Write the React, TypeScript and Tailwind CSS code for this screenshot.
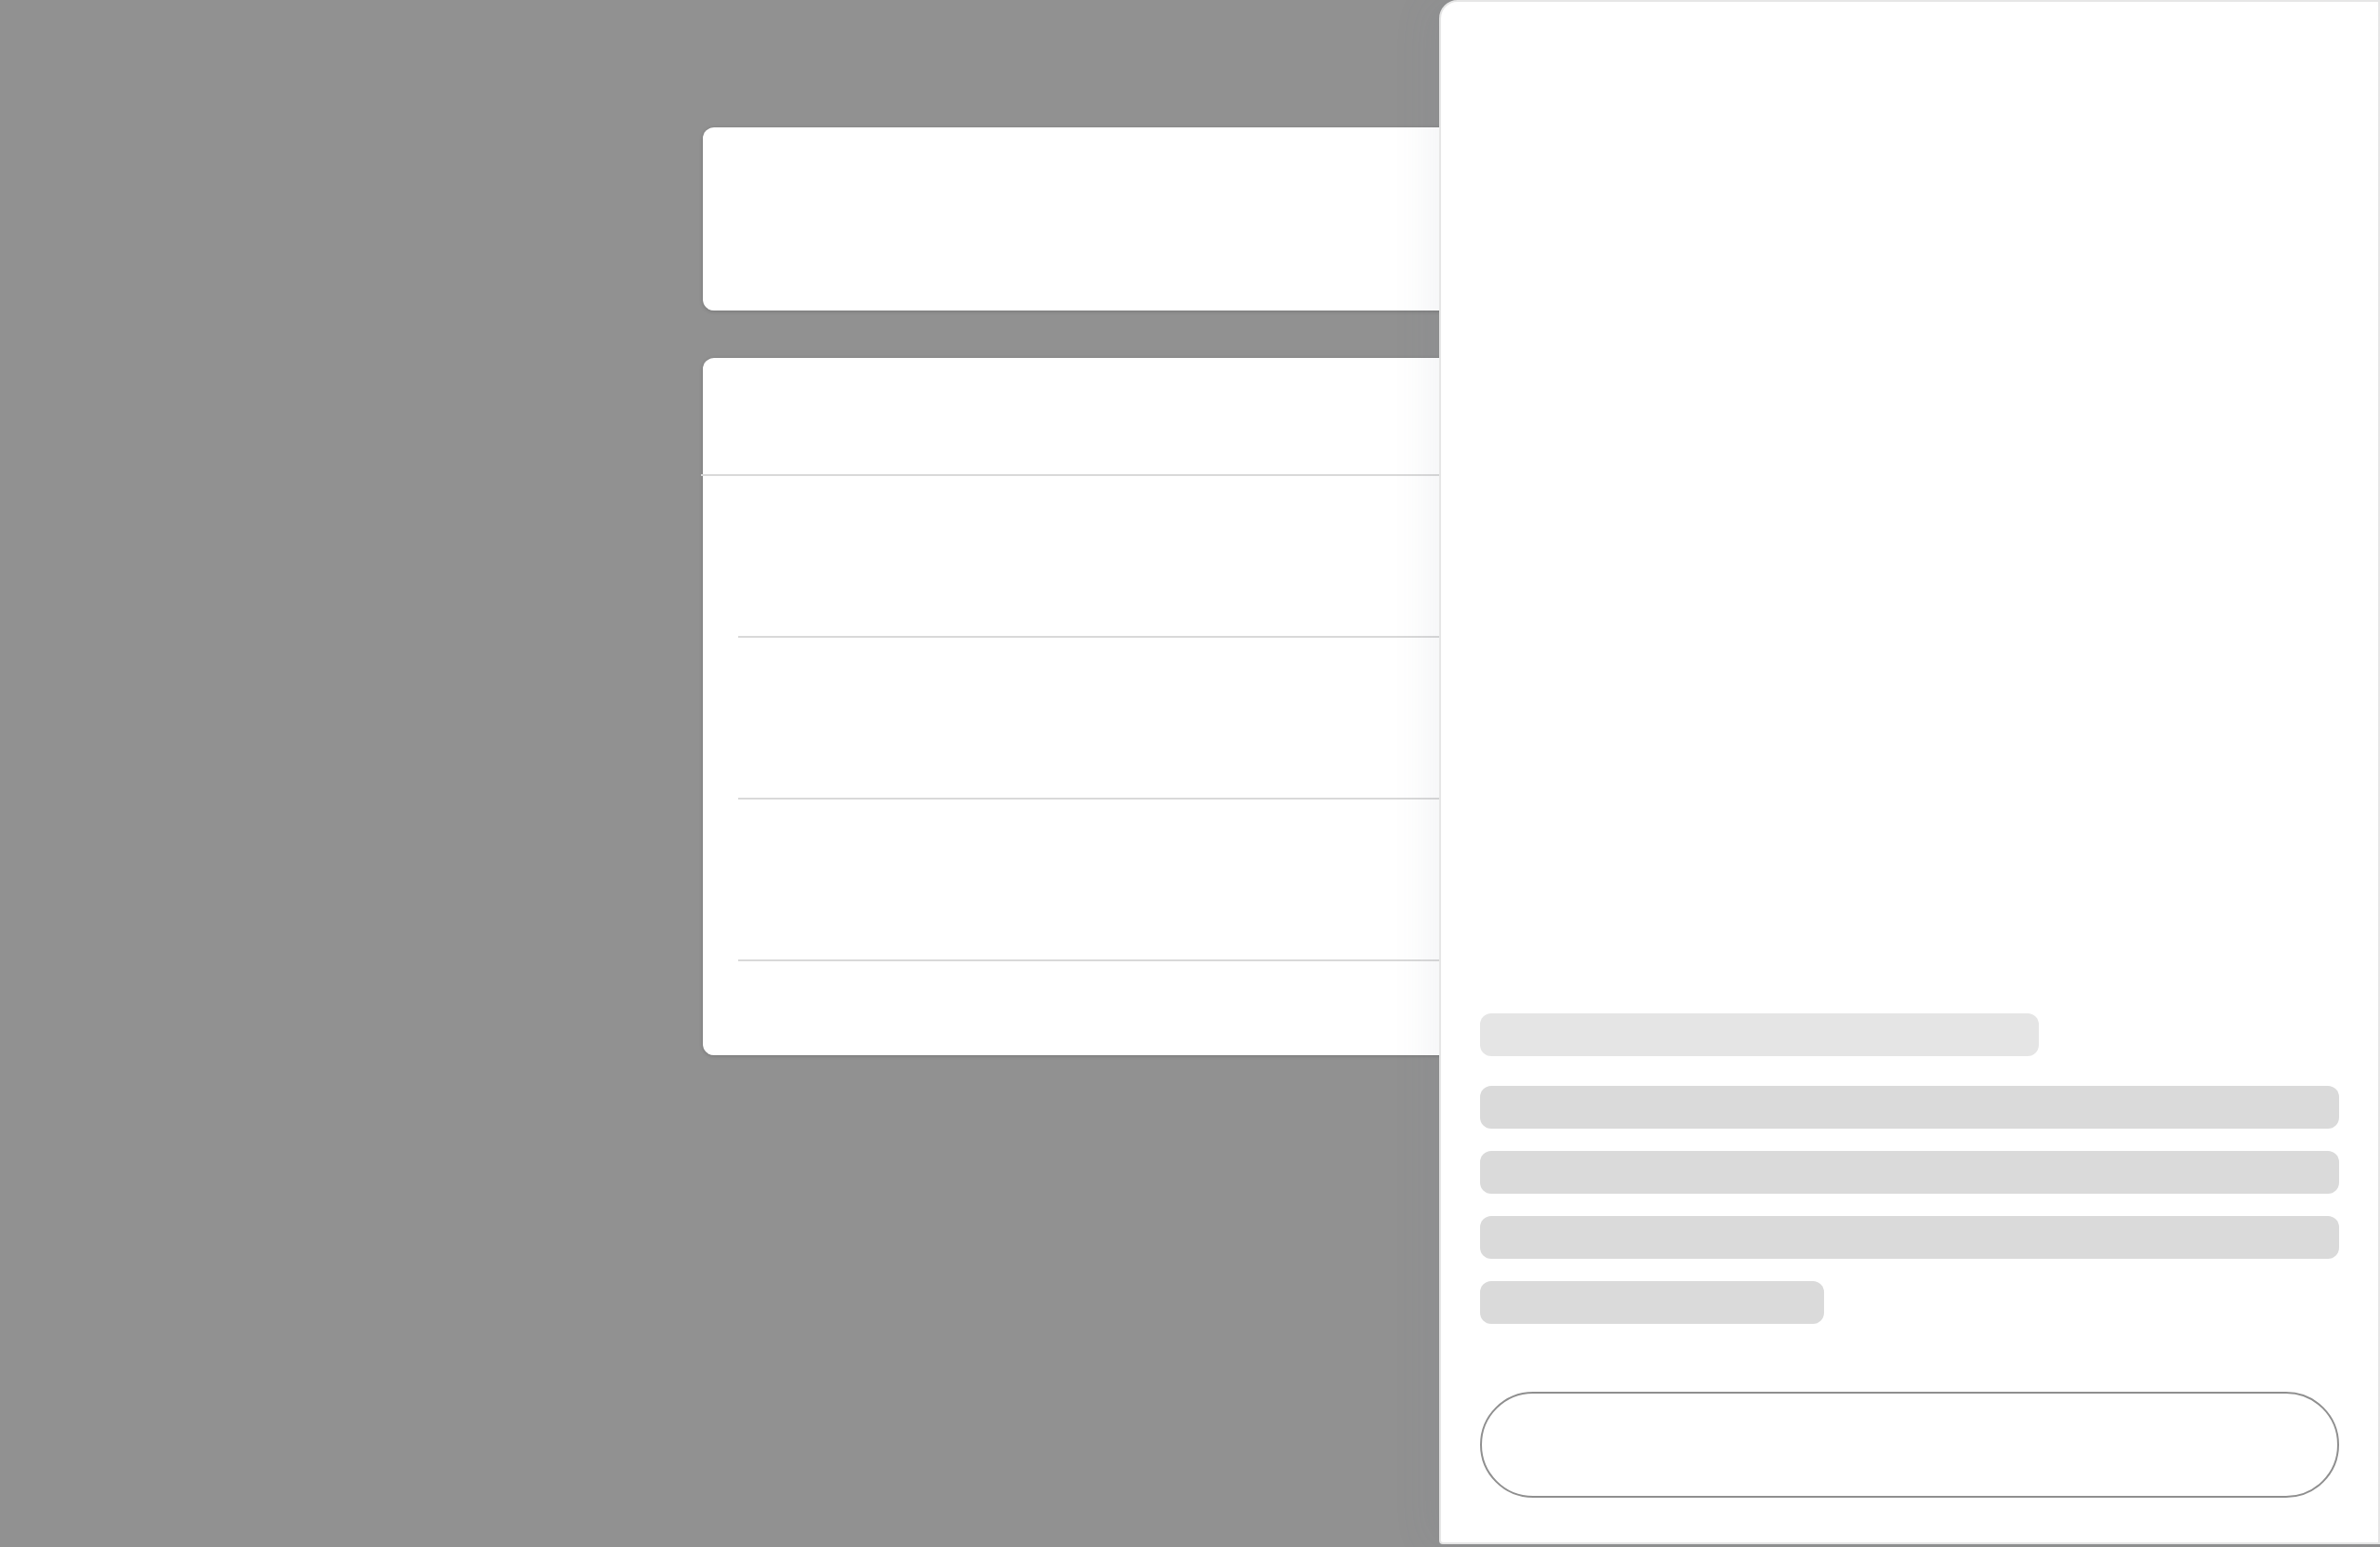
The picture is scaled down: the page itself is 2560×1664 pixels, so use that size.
export default function App() {
  const rows = [0, 1, 2];

  return (
    <div className="relative min-h-[1664px] w-full overflow-hidden bg-[#919191] font-['Inter',sans-serif]">
      {/* page content behind the drawer */}
      <div className="mx-auto flex w-[1048px] flex-col gap-[51px] pt-[137px]">
        <div className="h-[197px] rounded-xl bg-white shadow-[0_1px_4px_rgba(0,0,0,0.18)]" />

        <div className="flex flex-col rounded-xl bg-white shadow-[0_1px_4px_rgba(0,0,0,0.18)]">
          <div className="h-[125px]" />
          <div className="-ml-[2px] h-[2px] bg-[#d9d9d9]" />
          {rows.map((r) => (
            <div key={r} className="ml-[38px] h-[174px] border-b-2 border-[#d9d9d9]" />
          ))}
          <div className="h-[101px]" />
        </div>
      </div>

      {/* side drawer */}
      <aside className="fixed right-0 top-0 flex h-[1661px] w-[1012px] flex-col justify-end rounded-tl-[20px] rounded-bl-[4px] border-2 border-[#e6e6e6] bg-white px-[42px] pb-[48px] shadow-[-12px_0_40px_rgba(100,116,139,0.08)]">
        <div className="h-[46px] w-[601px] rounded-xl bg-[#e5e5e5]" />
        <div className="mt-[32px] flex flex-col gap-[24px]">
          <div className="h-[46px] w-full rounded-xl bg-[#dadada]" />
          <div className="h-[46px] w-full rounded-xl bg-[#dadada]" />
          <div className="h-[46px] w-full rounded-xl bg-[#dadada]" />
          <div className="h-[46px] w-[370px] rounded-xl bg-[#dadada]" />
        </div>
        <button className="mt-[73px] h-[114px] w-full rounded-full border-2 border-[#8f8f8f] bg-white" />
      </aside>
    </div>
  );
}
